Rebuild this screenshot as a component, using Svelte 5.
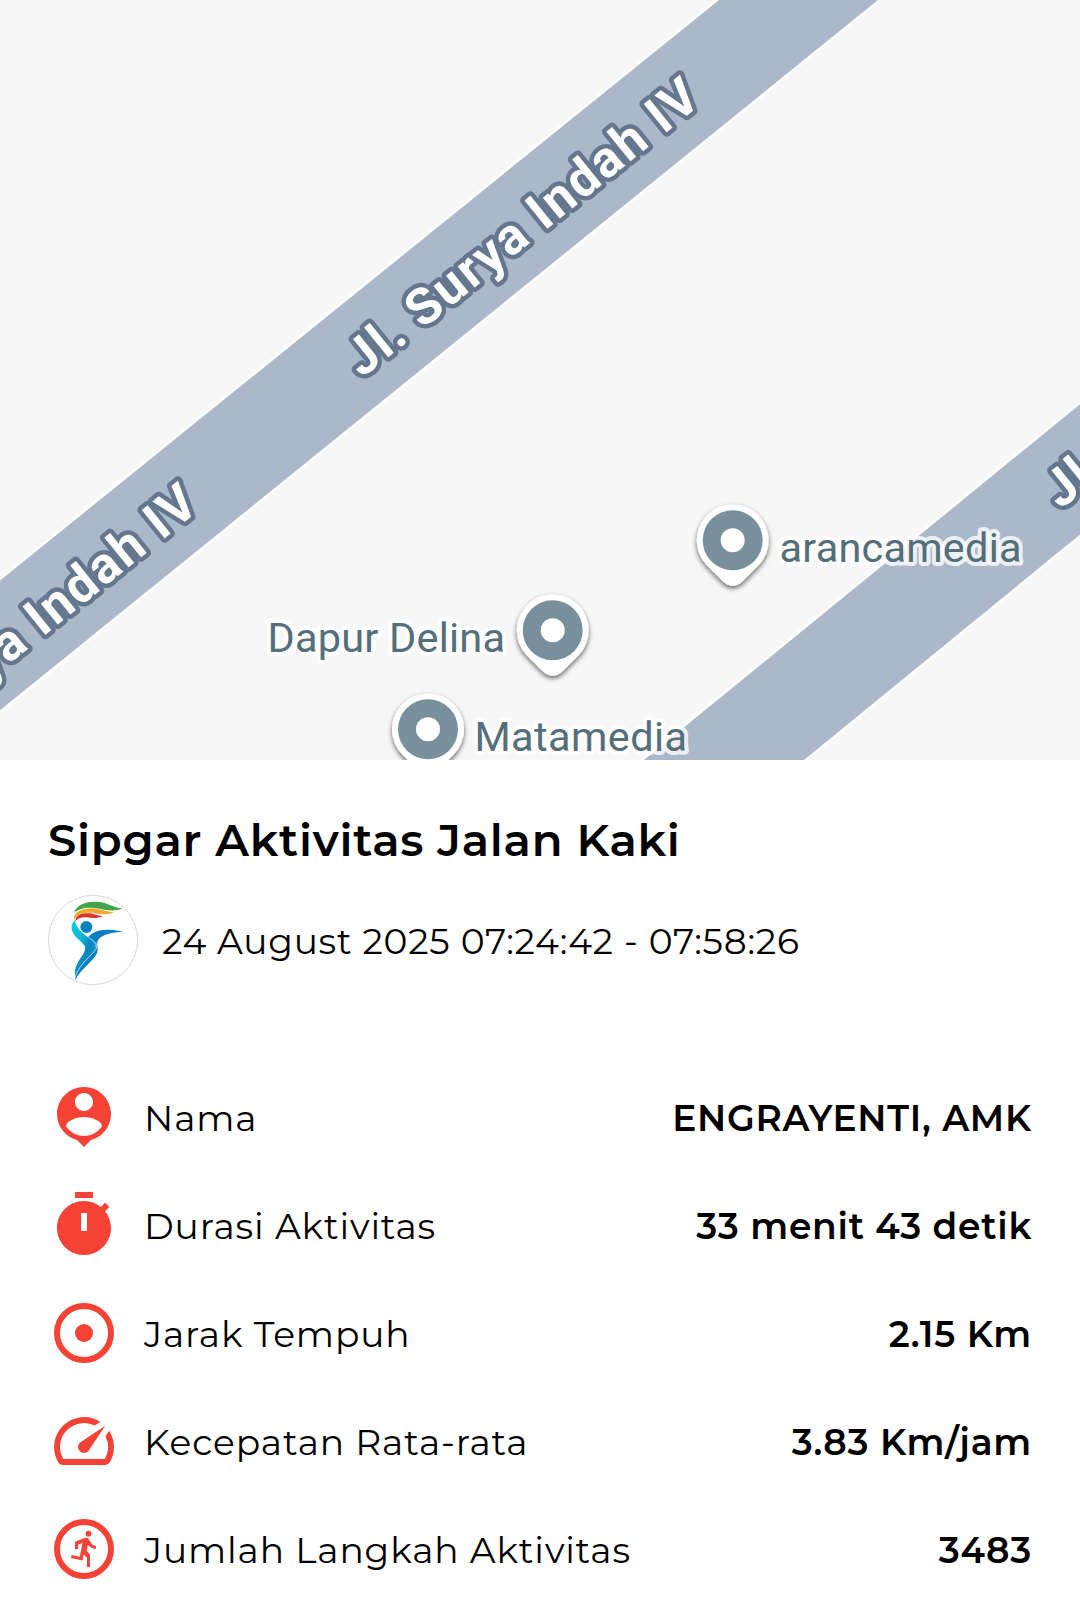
<script lang="ts">
	type Row = { icon: string; label: string; value: string };

	const streetLabels = [
		{ x: 362, y: 378.6 },
		{ x: -140, y: 784.6 },
		{ x: 1060.5, y: 510 }
	];

	const places = [
		{ name: 'arancamedia', x: 732.7, y: 540.3, textX: 779.5, textY: 561.7, width: 242 },
		{ name: 'Dapur Delina', x: 552.7, y: 630.3, textX: 267.5, textY: 651.7, width: 237.5 },
		{ name: 'Matamedia', x: 428, y: 729.3, textX: 474.5, textY: 750.7, width: 212.5 }
	];

	const rows: Row[] = [
		{ icon: 'person', label: 'Nama', value: 'ENGRAYENTI, AMK' },
		{ icon: 'timer', label: 'Durasi Aktivitas', value: '33 menit 43 detik' },
		{ icon: 'target', label: 'Jarak Tempuh', value: '2.15 Km' },
		{ icon: 'speed', label: 'Kecepatan Rata-rata', value: '3.83 Km/jam' },
		{ icon: 'steps', label: 'Jumlah Langkah Aktivitas', value: '3483' }
	];
</script>

<div class="screen">
	<svg class="map" viewBox="0 0 1080 760" width="1080" height="760">
		<defs>
			<filter id="pin-shadow" x="-30%" y="-30%" width="160%" height="160%">
				<feDropShadow dx="0" dy="2.5" stdDeviation="2.5" flood-color="#000" flood-opacity="0.6" />
			</filter>
		</defs>
		<path class="road" d="M-10 587 717 0 727 -8H890L880 0 -10 720Z" />
		<path class="road" d="M1090 394.5 642 760 632 768H796L806 760 1090 528Z" />

		{#each streetLabels as s}
			<text class="street" textLength="438.5" transform="translate({s.x} {s.y}) rotate(-38.97)">Jl. Surya Indah IV</text>
		{/each}

		{#each places as p}
			<g transform="translate({p.x} {p.y})">
				<path
					filter="url(#pin-shadow)"
					fill="#fff"
					d="M-26 25A36 36 0 1 1 26 25L10 41Q0 50-10 41Z"
				/>
				<circle r="30" fill="#78909c" />
				<circle r="12" fill="#fff" />
			</g>
			<text class="place" x={p.textX} y={p.textY} textLength={p.width}>{p.name}</text>
		{/each}
	</svg>

	<section class="details">
		<h1>Sipgar Aktivitas Jalan Kaki</h1>
		<div class="meta">
			<svg class="avatar" viewBox="24 30 270 270" width="90" height="90">
				<defs>
					<linearGradient id="body" x1="0" y1="0" x2="1" y2="1">
						<stop offset="0" stop-color="#00cfe0" />
						<stop offset="0.35" stop-color="#0cb9d4" />
						<stop offset="0.6" stop-color="#0a83c0" />
						<stop offset="1" stop-color="#16b5cf" />
					</linearGradient>
				</defs>
				<circle cx="159" cy="165" r="134" fill="#fff" stroke="#c4c4c4" stroke-width="2" />
				<path fill="#43a547" d="M102 83C110 58 140 49 168 50C202 51 218 68 248 70C220 83 195 74 165 69C135 66 116 73 102 83Z" />
				<path fill="#f0ab2c" d="M102 104C98 80 130 69 160 70C190 74 202 82 222 81C202 93 178 87 155 83C128 82 111 90 102 104Z" />
				<path fill="#d8352f" d="M106 109C105 90 128 83 150 85C166 87 172 93 188 93C170 102 155 99 140 97C123 96 112 101 106 109Z" />
				<circle cx="139" cy="126" r="18" fill="#0880bd" />
				<path fill="#077fbc" d="M143 158C160 137 190 127 249 140C215 142 190 148 177 161C169 170 172 177 173 190C175 223 128 242 106 286C104 262 120 238 143 215C162 197 167 192 167 182C167 172 151 164 143 158Z" />
				<path fill="url(#body)" d="M105 105C87 123 94 144 114 162C134 180 142 186 130 206C116 230 102 240 105 276C118 242 137 222 153 207C168 193 171 184 161 172C143 153 107 136 105 105Z" />
				<path fill="none" stroke="#fff" stroke-width="2" d="M146 158C165 168 174 178 169 191C161 208 120 232 105 277" />
			</svg>
			<span class="date">24 August 2025 07:24:42 - 07:58:26</span>
		</div>

		<ul class="rows">
			{#each rows as row}
				<li class="row">
					<svg class="icon" viewBox="0 0 24 24" width="72" height="72">
						{#if row.icon === 'person'}
							<path d="M12 2c-4.97 0-9 4.03-9 9 0 4.17 2.84 7.67 6.69 8.69L12 22l2.31-2.31C18.16 18.67 21 15.17 21 11c0-4.97-4.03-9-9-9zm0 2c1.66 0 3 1.34 3 3s-1.34 3-3 3-3-1.34-3-3 1.34-3 3-3zm0 14.3c-2.5 0-4.71-1.28-6-3.22.03-1.99 4-3.08 6-3.08 1.99 0 5.97 1.09 6 3.08-1.29 1.94-3.5 3.22-6 3.22z" />
						{:else if row.icon === 'timer'}
							<path d="M15 1H9v2h6V1zm-4 13h2V8h-2v6zm8.03-6.61l1.42-1.42c-.43-.51-.9-.99-1.41-1.41l-1.42 1.42C16.07 4.74 14.12 4 12 4c-4.97 0-9 4.03-9 9s4.02 9 9 9 9-4.03 9-9c0-2.12-.74-4.07-1.97-5.61z" />
						{:else if row.icon === 'target'}
							<circle class="ring" cx="12" cy="12" r="9" />
							<circle cx="12" cy="12" r="3" />
						{:else if row.icon === 'speed'}
							<path d="M20.38 8.57l-1.23 1.85a8 8 0 0 1-.22 7.58H5.07A8 8 0 0 1 15.58 6.85l1.85-1.23A10 10 0 0 0 3.35 19a2 2 0 0 0 1.72 1h13.85a2 2 0 0 0 1.74-1 10 10 0 0 0-.27-10.44zm-9.79 6.84a2 2 0 0 0 2.83 0l5.66-8.49-8.49 5.66a2 2 0 0 0 0 2.83z" />
						{:else}
							<circle class="ring" cx="12" cy="12" r="9" />
							<circle cx="13.5" cy="6.9" r="0.95" />
							<path d="M9 12V9.55L12.4 8.25C13 8.1 13.4 8.4 13.7 8.9C14.2 9.8 14.8 10.9 16 11V12C14.8 11.9 13.9 11.3 13.3 10.6L12.9 12.7L14 13.8V18H13V14.9L11.9 13.8L11.5 15.8L7.67 15L7.85 14L10.6 14.55L11.5 10L10 10.6V12Z" />
						{/if}
					</svg>
					<span class="label">{row.label}</span>
					<span class="value">{row.value}</span>
				</li>
			{/each}
		</ul>
	</section>
</div>

<style>
	:global(body) {
		background: #ffffff;
	}
	.screen {
		width: 1080px;
		height: 1620px;
		overflow: hidden;
		background: #ffffff;
		color: #000000;
		font-family: Montserrat, Inter, sans-serif;
		letter-spacing: 0.75px;
	}
	.map {
		display: block;
		background: #f7f7f7;
		letter-spacing: 0;
	}
	.road {
		fill: #aab8c9;
		stroke: #ffffff;
		stroke-width: 2.5;
	}
	.street {
		font-family: Roboto, sans-serif;
		font-size: 51px;
		font-weight: 700;
		fill: #ffffff;
		stroke: #65778f;
		stroke-width: 9;
		stroke-linejoin: round;
		paint-order: stroke;
	}
	.place {
		font-family: Roboto, sans-serif;
		font-size: 41.5px;
		fill: #546e7a;
		stroke: rgba(255, 255, 255, 0.8);
		stroke-width: 8;
		stroke-linejoin: round;
		paint-order: stroke;
	}
	.details {
		padding: 50px 48px 0;
	}
	h1 {
		margin: 0;
		font-size: 45px;
		line-height: 60px;
		font-weight: 600;
		white-space: nowrap;
	}
	.meta {
		display: flex;
		align-items: center;
		gap: 24px;
		margin-top: 25px;
	}
	.avatar {
		flex-shrink: 0;
	}
	.date {
		padding-top: 1px;
		font-size: 36px;
		white-space: nowrap;
	}
	.rows {
		list-style: none;
		margin: 78px 0 0;
		padding: 0;
	}
	.row {
		display: flex;
		align-items: center;
		height: 108px;
	}
	.icon {
		flex-shrink: 0;
		fill: #f44336;
		fill-rule: evenodd;
	}
	.ring {
		fill: none;
		stroke: #f44336;
		stroke-width: 2;
	}
	.label,
	.value {
		padding-top: 1px;
		font-size: 36px;
		white-space: nowrap;
	}
	.label {
		margin-left: 24px;
		letter-spacing: 0.87px;
	}
	.value {
		margin-left: auto;
		font-weight: 600;
	}
</style>
